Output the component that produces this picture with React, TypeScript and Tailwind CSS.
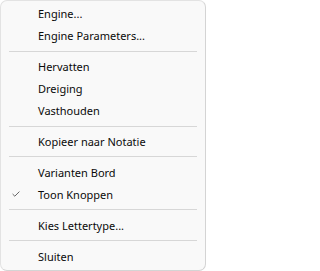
type MenuEntry = { label: string; checked?: boolean } | 'sep';

const entries: MenuEntry[] = [
  { label: 'Engine...' },
  { label: 'Engine Parameters...' },
  'sep',
  { label: 'Hervatten' },
  { label: 'Dreiging' },
  { label: 'Vasthouden' },
  'sep',
  { label: 'Kopieer naar Notatie' },
  'sep',
  { label: 'Varianten Bord' },
  { label: 'Toon Knoppen', checked: true },
  'sep',
  { label: 'Kies Lettertype...' },
  'sep',
  { label: 'Sluiten' },
];

function CheckMark() {
  return (
    <svg width="8" height="6" viewBox="0 0 8 6" className="text-[#555555]">
      <path d="M0.6 3 L2.8 5.2 L7.4 0.6" fill="none" stroke="currentColor" strokeWidth="0.9" />
    </svg>
  );
}

export default function App() {
  return (
    <div className="h-[271px] w-[206px] bg-white font-['Noto_Sans',sans-serif]">
      <div className="flex h-full w-full flex-col rounded-[7px] border border-[#e3e3e3] border-r-[#d4d4d4] border-b-[#d4d4d4] bg-[#f9f9f9] pt-[2px] pb-[3px] text-[11px] text-[#0a0a0a]">
        {entries.map((entry, i) =>
          entry === 'sep' ? (
            <div key={i} className="flex h-[9px] items-center px-[8px]">
              <div className="h-px w-full bg-[#d7d7d7]" />
            </div>
          ) : (
            <div key={i} className="flex h-[22px] items-center">
              <span className="flex w-[37px] items-center pl-[11px]">
                {entry.checked && <CheckMark />}
              </span>
              <span className="leading-none">{entry.label}</span>
            </div>
          )
        )}
      </div>
    </div>
  );
}
